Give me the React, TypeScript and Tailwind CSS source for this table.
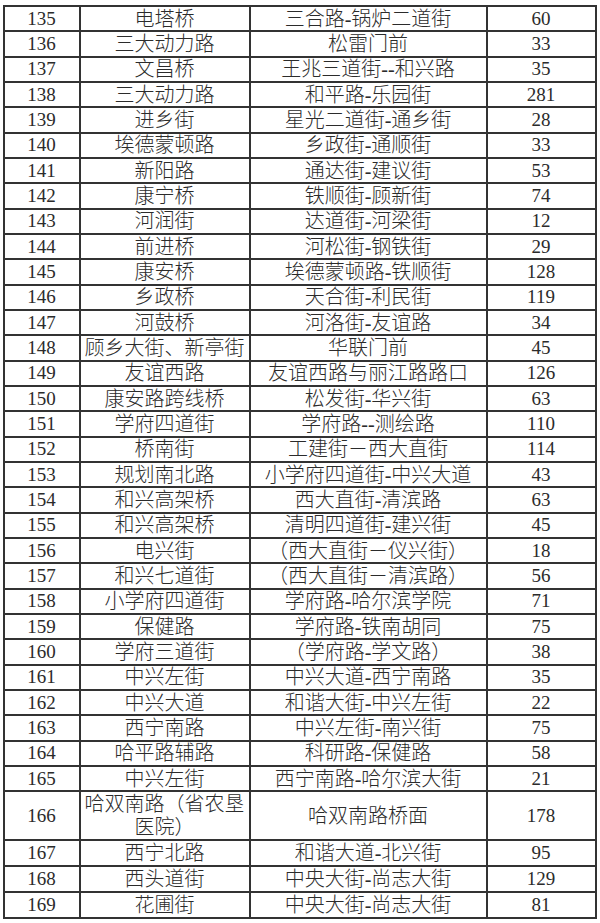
import React from "react";

type Row = [string, React.ReactNode, string, string];

const rows: Row[] = [
  ["135", "电塔桥", "三合路-锅炉二道街", "60"],
  ["136", "三大动力路", "松雷门前", "33"],
  ["137", "文昌桥", "王兆三道街--和兴路", "35"],
  ["138", "三大动力路", "和平路-乐园街", "281"],
  ["139", "进乡街", "星光二道街-通乡街", "28"],
  ["140", "埃德蒙顿路", "乡政街-通顺街", "33"],
  ["141", "新阳路", "通达街-建议街", "53"],
  ["142", "康宁桥", "铁顺街-顾新街", "74"],
  ["143", "河润街", "达道街-河梁街", "12"],
  ["144", "前进桥", "河松街-钢铁街", "29"],
  ["145", "康安桥", "埃德蒙顿路-铁顺街", "128"],
  ["146", "乡政桥", "天合街-利民街", "119"],
  ["147", "河鼓桥", "河洛街-友谊路", "34"],
  ["148", "顾乡大街、新亭街", "华联门前", "45"],
  ["149", "友谊西路", "友谊西路与丽江路路口", "126"],
  ["150", "康安路跨线桥", "松发街-华兴街", "63"],
  ["151", "学府四道街", "学府路--测绘路", "110"],
  ["152", "桥南街", "工建街－西大直街", "114"],
  ["153", "规划南北路", "小学府四道街-中兴大道", "43"],
  ["154", "和兴高架桥", "西大直街-清滨路", "63"],
  ["155", "和兴高架桥", "清明四道街-建兴街", "45"],
  ["156", "电兴街", "（西大直街－仪兴街）", "18"],
  ["157", "和兴七道街", "（西大直街－清滨路）", "56"],
  ["158", "小学府四道街", "学府路-哈尔滨学院", "71"],
  ["159", "保健路", "学府路-铁南胡同", "75"],
  ["160", "学府三道街", "（学府路-学文路）", "38"],
  ["161", "中兴左街", "中兴大道-西宁南路", "35"],
  ["162", "中兴大道", "和谐大街-中兴左街", "22"],
  ["163", "西宁南路", "中兴左街-南兴街", "75"],
  ["164", "哈平路辅路", "科研路-保健路", "58"],
  ["165", "中兴左街", "西宁南路-哈尔滨大街", "21"],
  [
    "166",
    <>
      哈双南路（省农垦
      <br />
      医院）
    </>,
    "哈双南路桥面",
    "178",
  ],
  ["167", "西宁北路", "和谐大道-北兴街", "95"],
  ["168", "西头道街", "中央大街-尚志大街", "129"],
  ["169", "花圃街", "中央大街-尚志大街", "81"],
];

export default function App() {
  return (
    <div className="w-[600px] h-[923px] bg-white overflow-hidden pt-[5px] pl-[2.5px]">
      <table
        className="border-collapse table-fixed w-[592px] text-[#2b2b2b]"
        style={{ fontFamily: '"Liberation Serif", "Noto Sans CJK SC", serif' }}
      >
        <colgroup>
          <col className="w-[76px]" />
          <col className="w-[170px]" />
          <col className="w-[237px]" />
          <col className="w-[109px]" />
        </colgroup>
        <tbody>
          {rows.map((r, i) => {
            const h =
              r[0] === "166"
                ? "h-[49px]"
                : i > 31
                ? "h-[26px]"
                : "h-[25.33px]";
            return (
              <tr key={r[0]} className={h}>
                {r.map((c, j) => (
                  <td
                    key={j}
                    className={`border-2 border-[#333] text-center align-middle p-0 whitespace-nowrap font-light ${
                      j === 0 || j === 3 ? "text-[19px]" : "text-[20px]"
                    } ${
                      r[0] === "166" && j === 1 ? "leading-[23px]" : "leading-[22px]"
                    }`}
                  >
                    {c}
                  </td>
                ))}
              </tr>
            );
          })}
        </tbody>
      </table>
    </div>
  );
}
